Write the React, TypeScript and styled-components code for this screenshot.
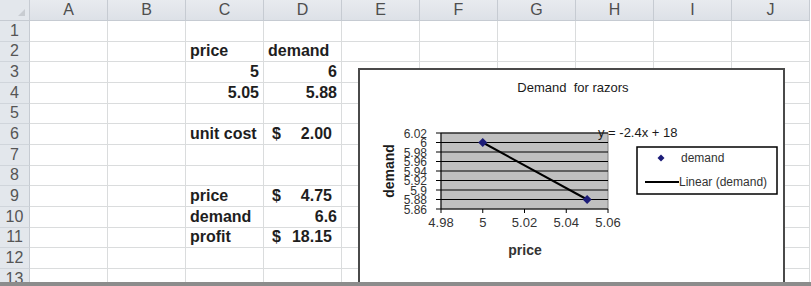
import * as React from "react";
import styled, { createGlobalStyle } from "styled-components";

const COLS = ["A", "B", "C", "D", "E", "F", "G", "H", "I", "J"];
const ROW_COUNT = 13;

type Cell =
  | { kind: "text"; value: string }
  | { kind: "num"; value: string }
  | { kind: "money"; value: string };

const cells: Record<string, Cell> = {
  C2: { kind: "text", value: "price" },
  D2: { kind: "text", value: "demand" },
  C3: { kind: "num", value: "5" },
  D3: { kind: "num", value: "6" },
  C4: { kind: "num", value: "5.05" },
  D4: { kind: "num", value: "5.88" },
  C6: { kind: "text", value: "unit cost" },
  D6: { kind: "money", value: "2.00" },
  C9: { kind: "text", value: "price" },
  D9: { kind: "money", value: "4.75" },
  C10: { kind: "text", value: "demand" },
  D10: { kind: "num", value: "6.6" },
  C11: { kind: "text", value: "profit" },
  D11: { kind: "money", value: "18.15" },
};

// chart scale (inner svg coords)
const PLOT = { left: 81, right: 248, top: 63, bottom: 139 };
const xOf = (v: number) =>
  PLOT.left + ((v - 4.98) / 0.08) * (PLOT.right - PLOT.left);
const yOf = (v: number) =>
  PLOT.top + ((6.02 - v) / 0.16) * (PLOT.bottom - PLOT.top);

const yTicks = ["6.02", "6", "5.98", "5.96", "5.94", "5.92", "5.9", "5.88", "5.86"];
const xTicks = ["4.98", "5", "5.02", "5.04", "5.06"];
const points = [
  { x: 5, y: 6 },
  { x: 5.05, y: 5.88 },
];

function Diamond({ cx, cy, r }: { cx: number; cy: number; r: number }) {
  return (
    <polygon
      points={`${cx},${cy - r} ${cx + r},${cy} ${cx},${cy + r} ${cx - r},${cy}`}
      fill="#1c1c78"
    />
  );
}

function ChartBody() {
  return (
    <svg width="423" height="214" viewBox="0 0 423 214">
      <g fontFamily="'Liberation Sans', Arial, sans-serif" fill="#1a1a1a">
        <text x="213" y="22" fontSize="13" textAnchor="middle" xmlSpace="preserve">
          Demand  for razors
        </text>

        <rect
          x={PLOT.left}
          y={PLOT.top}
          width={PLOT.right - PLOT.left}
          height={PLOT.bottom - PLOT.top}
          fill="#c0c0c0"
          stroke="#808080"
        />
        {yTicks.map((t, i) => {
          const y = PLOT.top + i * 9.5;
          return (
            <g key={t}>
              <line x1={PLOT.left} x2={PLOT.right} y1={y} y2={y} stroke="#000" />
              <line x1={PLOT.left - 5} x2={PLOT.left} y1={y} y2={y} stroke="#000" />
              <text x="67" y={y + 4.5} fontSize="12" textAnchor="end" fill="#333">
                {t}
              </text>
            </g>
          );
        })}
        <line x1={PLOT.left} x2={PLOT.left} y1={PLOT.top} y2={PLOT.bottom} stroke="#000" />
        {xTicks.map((t, i) => {
          const x = PLOT.left + i * ((PLOT.right - PLOT.left) / 4);
          return (
            <g key={t}>
              <line x1={x} x2={x} y1={PLOT.bottom} y2={PLOT.bottom + 4} stroke="#000" />
              <text x={x} y="157" fontSize="13" textAnchor="middle" fill="#333">
                {t}
              </text>
            </g>
          );
        })}

        <line
          x1={xOf(points[0].x)}
          y1={yOf(points[0].y)}
          x2={xOf(points[1].x)}
          y2={yOf(points[1].y)}
          stroke="#000"
          strokeWidth="2"
        />
        {points.map((p) => (
          <Diamond key={p.x} cx={xOf(p.x)} cy={yOf(p.y)} r={4.5} />
        ))}

        <text x="238" y="67" fontSize="13">
          y = -2.4x + 18
        </text>

        <text x="165" y="185" fontSize="14" fontWeight="bold" textAnchor="middle" fill="#333">
          price
        </text>
        <text
          x="0"
          y="0"
          fontSize="14"
          fontWeight="bold"
          textAnchor="middle"
          transform="translate(34 101) rotate(-90)"
        >
          demand
        </text>

        <rect x="277" y="77" width="140" height="47" fill="#fff" stroke="#000" strokeWidth="1.5" />
        <Diamond cx={301} cy={88} r={3.5} />
        <text x="321" y="92" fontSize="12" fill="#333">
          demand
        </text>
        <line x1="285" x2="319" y1="112" y2="112" stroke="#000" strokeWidth="2" />
        <text x="319" y="116" fontSize="12" fill="#333">
          Linear (demand)
        </text>
      </g>
    </svg>
  );
}

function App() {
  const rows = Array.from({ length: ROW_COUNT }, (_, i) => i + 1);
  return (
    <>
      <GlobalStyle />
      <Frame>
        <Sheet>
          <Corner />
          {COLS.map((c) => (
            <ColHeader key={c}>{c}</ColHeader>
          ))}
          {rows.map((r) => (
            <React.Fragment key={r}>
              <RowHeader>{r}</RowHeader>
              {COLS.map((c) => {
                const cell = cells[c + r];
                if (!cell) return <GridCell key={c} />;
                if (cell.kind === "money")
                  return (
                    <GridCell key={c} $align="money">
                      <span>$</span>
                      <span>{cell.value}</span>
                    </GridCell>
                  );
                return (
                  <GridCell key={c} $align={cell.kind === "num" ? "right" : "left"}>
                    {cell.value}
                  </GridCell>
                );
              })}
            </React.Fragment>
          ))}
        </Sheet>
        <Chart>
          <ChartBody />
        </Chart>
      </Frame>
      <BottomEdge />
    </>
  );
}

const GlobalStyle = createGlobalStyle`
  html, body {
    margin: 0;
    padding: 0;
    background: #fff;
    overflow: hidden;
  }
  body {
    font-family: "Liberation Sans", Arial, sans-serif;
  }
`;

const Frame = styled.div`
  position: relative;
  width: 811px;
  height: 282px;
  overflow: hidden;
`;

const Sheet = styled.div`
  display: grid;
  grid-template-columns: 30px repeat(9, 78px) 78px;
  grid-template-rows: 21px repeat(13, 20.67px);
`;

const Corner = styled.div`
  background: #e3e7ec;
  border-right: 1px solid #c6cbd2;
  border-bottom: 1px solid #c6cbd2;
  position: relative;
  &::after {
    content: "";
    position: absolute;
    right: 4px;
    bottom: 4px;
    border-left: 7px solid transparent;
    border-bottom: 7px solid #c8ccd1;
  }
`;

const ColHeader = styled.div`
  display: flex;
  align-items: center;
  justify-content: center;
  background: linear-gradient(#e8ebef, #dde1e7);
  border-right: 1px solid #c6cbd2;
  border-bottom: 1px solid #c6cbd2;
  color: #4e4e4e;
  font-size: 16px;
`;

const RowHeader = styled.div`
  display: flex;
  align-items: center;
  justify-content: center;
  background: #e3e7ec;
  border-right: 1px solid #c6cbd2;
  border-bottom: 1px solid #d0d5db;
  color: #555;
  font-size: 16px;
`;

const GridCell = styled.div<{ $align?: "left" | "right" | "money" }>`
  display: flex;
  align-items: center;
  justify-content: ${(p) =>
    p.$align === "right" ? "flex-end" : p.$align === "money" ? "space-between" : "flex-start"};
  padding: ${(p) => (p.$align === "money" ? "0 9px 0 8px" : "0 4px")};
  border-right: 1px solid #dadcdd;
  border-bottom: 1px solid #dadcdd;
  font-size: 16px;
  font-weight: bold;
  color: #1e1e1e;
  white-space: nowrap;
`;

const Chart = styled.div`
  position: absolute;
  left: 358px;
  top: 68px;
  width: 423px;
  height: 230px;
  background: #fff;
  border: 2px solid #4a4a4a;
`;

const BottomEdge = styled.div`
  height: 4px;
  background: #8c8c8c;
`;

export default App;
